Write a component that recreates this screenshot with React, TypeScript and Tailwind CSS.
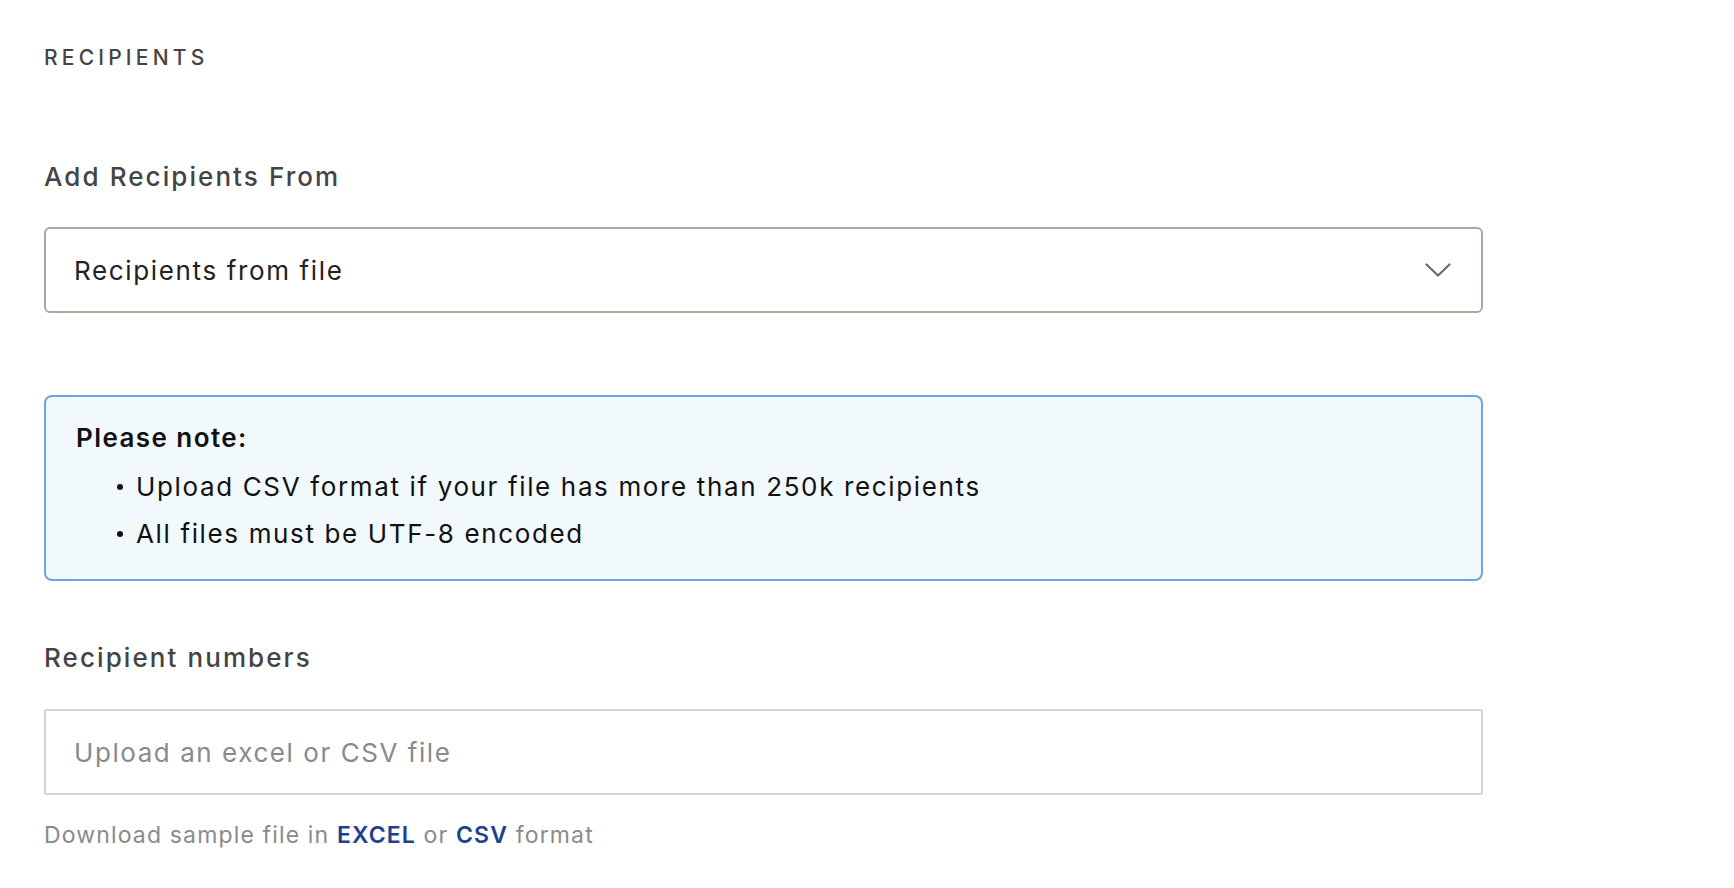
import React from 'react';

const font = { fontFamily: 'Inter, "Open Sans", sans-serif' };

const notes = ['Upload CSV format if your file has more than 250k recipients', 'All files must be UTF-8 encoded'];

export default function App() {
    return (
        <div className="min-h-screen bg-white pl-[44px] pt-[44px]" style={font}>
            <div className="w-[1439px]">
                <h2 className="text-[21px] leading-[28px] font-medium tracking-[0.2em] text-[#444]">RECIPIENTS</h2>

                <label className="block mt-[89px] text-[26px] leading-[32px] font-medium tracking-[0.08em] text-[#444]">
                    Add Recipients From
                </label>

                <div className="mt-[34px] h-[86px] flex items-center justify-between pl-[28px] pr-[30px] border-2 border-[#a7ab9e] rounded-[6px]">
                    <span className="text-[26px] tracking-[0.063em] text-[#222]">Recipients from file</span>
                    <svg width="26" height="14" viewBox="0 0 26 14" fill="none">
                        <path d="M1.5 1.5 L13 12.5 L24.5 1.5" stroke="#6b6b6b" strokeWidth="2.2" strokeLinecap="round" strokeLinejoin="round" />
                    </svg>
                </div>

                <div className="mt-[82px] h-[186px] border-2 border-[#6aa5e8] bg-[#f1f9fd] rounded-[8px] pl-[30px] pt-[25px]">
                    <p className="text-[26px] leading-[32px] font-semibold tracking-[0.055em] text-[#111]">Please note:</p>
                    <ul className="mt-[9px]">
                        {notes.map((n) => (
                            <li key={n} className="flex items-center h-[47px] pl-[41px]">
                                <span className="w-[6px] h-[6px] rounded-full bg-[#111] mr-[13px]" />
                                <span className="text-[26px] tracking-[0.063em] text-[#111]">{n}</span>
                            </li>
                        ))}
                    </ul>
                </div>

                <label className="block mt-[61px] text-[26px] leading-[32px] font-medium tracking-[0.08em] text-[#444]">
                    Recipient numbers
                </label>

                <div className="mt-[35px] h-[86px] flex items-center pl-[28px] border-2 border-[#d3d6d0] rounded-[2px]">
                    <span className="text-[26px] tracking-[0.06em] text-[#8a8a8a]">Upload an excel or CSV file</span>
                </div>

                <p className="mt-[26px] text-[23px] leading-[28px] tracking-[0.05em] text-[#8a8a8a]">
                    Download sample file in <a className="font-semibold text-[#1c4190]">EXCEL</a> or{' '}
                    <a className="font-semibold text-[#1c4190]">CSV</a> format
                </p>
            </div>
        </div>
    );
}
